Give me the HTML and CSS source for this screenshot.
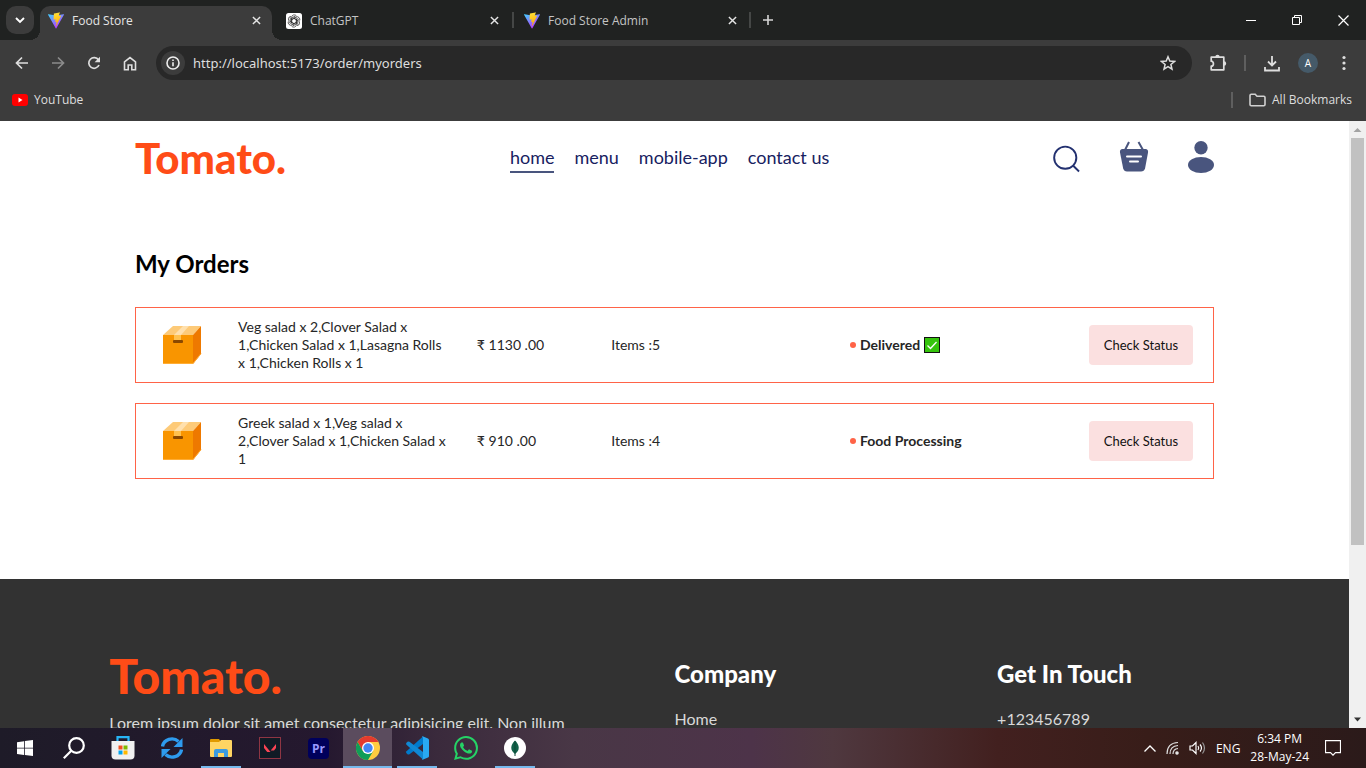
FILE: index.html
```
<!DOCTYPE html>
<html lang="en">
<head>
<meta charset="utf-8">
<title>Food Store</title>
<link rel="stylesheet" href="styles.css">
</head>
<body>
<svg class="defs" width="0" height="0" aria-hidden="true">
  <defs>
    <linearGradient id="vite-a" x1="0" y1="0" x2="0.6" y2="1"><stop offset="0" stop-color="#41d1ff"/><stop offset="1" stop-color="#bd34fe"/></linearGradient>
    <linearGradient id="vite-b" x1="0.4" y1="0" x2="0.6" y2="1"><stop offset="0" stop-color="#ffea83"/><stop offset="0.1" stop-color="#ffdd35"/><stop offset="1" stop-color="#ffa800"/></linearGradient>
    <symbol id="vite" viewBox="0 0 256 257"><path fill="url(#vite-a)" d="M255 38 134 254c-2 4-9 4-11 0L1 38c-3-5 1-11 7-10l120 21L247 28c7-1 11 5 8 10z"/><path fill="url(#vite-b)" d="M185 0 97 17c-2 0-3 2-3 3l-5 92c0 2 2 4 4 4l25-6c2-1 4 1 4 4l-7 35c-1 3 1 5 4 4l15-4c3-1 5 1 4 4l-12 56c-1 4 4 5 6 3l77-157c1-3-1-5-4-5l-27 6c-3 0-5-2-4-5l17-61c1-3-1-5-6-5z"/></symbol>
    <symbol id="close" viewBox="0 0 10 10"><path d="M1 1l8 8M9 1L1 9" fill="none" stroke="currentColor" stroke-width="1.6"/></symbol>
    <symbol id="box" viewBox="0 0 40 40"><path fill="#fdca78" d="M1 10 11 1h28l-8 9z"/><path fill="#f99500" d="M1 10h30v29H1z"/><path fill="#ee7900" d="M31 10l8-9v28l-8 10z"/><path fill="#ffe0ad" d="M12 10l9-9h6l-8 9z"/><path fill="#ffc14f" d="M12 10h7v5h-7z"/><rect x="11" y="15" width="10" height="3" rx="1" fill="#8a4800"/><path d="M1 38.500h30l8-10" fill="none" stroke="#ffad35"/></symbol>
  </defs>
</svg>

<header class="chrome">
  <div class="tabstrip">
    <button class="tab-search" aria-label="Search tabs"><svg width="10" height="7" viewBox="0 0 10 7"><path d="M1 1l4 4 4-4" fill="none" stroke="#fff" stroke-width="1.900"/></svg></button>
    <div class="tab tab-active"><svg width="16" height="17"><use href="#vite"/></svg><span class="tab-title">Food Store</span><button class="tab-close" aria-label="Close tab"><svg width="9" height="9"><use href="#close"/></svg></button></div>
    <div class="tab"><svg width="16" height="16" viewBox="0 0 32 32"><rect width="32" height="32" rx="5" fill="#fff"/><g fill="none" stroke="#222" stroke-width="1.300"><g id="arm"><path d="M11 19.500V9a5.500 5.500 0 0 1 10-3M11.500 13.500l7.500-4.300 7 4"/></g><use href="#arm" transform="rotate(60 16 16)"/><use href="#arm" transform="rotate(120 16 16)"/><use href="#arm" transform="rotate(180 16 16)"/><use href="#arm" transform="rotate(240 16 16)"/><use href="#arm" transform="rotate(300 16 16)"/></g></svg><span class="tab-title">ChatGPT</span><button class="tab-close" aria-label="Close tab"><svg width="9" height="9"><use href="#close"/></svg></button></div>
    <div class="tab tab-ruled"><svg width="16" height="17"><use href="#vite"/></svg><span class="tab-title">Food Store Admin</span><button class="tab-close" aria-label="Close tab"><svg width="9" height="9"><use href="#close"/></svg></button></div>
    <button class="new-tab" aria-label="New tab"><svg width="12" height="12" viewBox="0 0 12 12"><path d="M6 1v10M1 6h10" stroke="#d5d5d5" stroke-width="1.600"/></svg></button>
    <div class="window-controls">
      <button aria-label="Minimize"><svg width="11" height="11" viewBox="0 0 11 11"><path d="M0 5.500h10" stroke="#fff"/></svg></button>
      <button aria-label="Restore"><svg width="11" height="11" viewBox="0 0 11 11" fill="none" stroke="#fff"><path d="M.5 2.500h7v7h-7zM2.500 2.500v-2h7v7h-2"/></svg></button>
      <button aria-label="Close"><svg width="11" height="11" viewBox="0 0 11 11"><path d="M.5.5l10 10M10.500.5l-10 10" stroke="#fff" stroke-width="1.200"/></svg></button>
    </div>
  </div>
  <div class="toolbar">
    <button aria-label="Back"><svg width="14" height="14" viewBox="0 0 14 14"><path d="M13 7H2M7 1.500L1.500 7 7 12.500" fill="none" stroke="#dedede" stroke-width="1.700"/></svg></button>
    <button aria-label="Forward"><svg width="14" height="14" viewBox="0 0 14 14"><path d="M1 7h11M7 1.500L12.500 7 7 12.500" fill="none" stroke="#8b8b8b" stroke-width="1.700"/></svg></button>
    <button aria-label="Reload"><svg width="14" height="14" viewBox="0 0 14 14"><path d="M12 9A5.300 5.300 0 1 1 11.500 4" fill="none" stroke="#dedede" stroke-width="1.700"/><path d="M13 .8v5.400H7.600z" fill="#dedede"/></svg></button>
    <button aria-label="Home"><svg width="14" height="15" viewBox="0 0 14 15"><path d="M1.500 5.800L7 1.500l5.500 4.300v7.900H8.800V9H5.200v4.700H1.500z" fill="none" stroke="#dedede" stroke-width="1.600"/></svg></button>
    <div class="omnibox">
      <button class="site-info" aria-label="Site information"><svg width="14" height="14" viewBox="0 0 14 14"><circle cx="7" cy="7" r="6" fill="none" stroke="#eee" stroke-width="1.600"/><path d="M7 6.200v4M7 3.600v1.500" stroke="#eee" stroke-width="1.600"/></svg></button>
      <input type="text" aria-label="Address" value="http://localhost:5173/order/myorders">
      <button class="star" aria-label="Bookmark this tab"><svg width="16" height="16" viewBox="0 0 16 16"><path d="M8 1.800l1.800 4.300 4.700.4-3.600 3 1.100 4.600L8 11.700l-4 2.400 1.100-4.600-3.600-3 4.700-.4z" fill="none" stroke="#dedede" stroke-width="1.500"/></svg></button>
    </div>
    <button class="ext" aria-label="Extensions"><svg width="18" height="18" viewBox="0 0 18 18"><path d="M2.200 3.200h12.600v12.600H2.200v-3.600c3 0 3-5 0-5z" fill="none" stroke="#dedede" stroke-width="1.700" stroke-linejoin="round"/><path d="M6.300 3a2.200 2.200 0 0 1 4.400 0zM15 7.300a2.200 2.200 0 0 1 0 4.400z" fill="#dedede"/></svg></button>
    <span class="rule"></span>
    <button class="dl" aria-label="Downloads"><svg width="16" height="17" viewBox="0 0 16 17"><path d="M8 1v9M4 6.500l4 4 4-4M1 12v3.500h14V12" fill="none" stroke="#dedede" stroke-width="1.800"/></svg></button>
    <button class="avatar" aria-label="Profile">A</button>
    <button class="more" aria-label="Menu"><svg width="4" height="16" viewBox="0 0 4 16" fill="#dedede"><circle cx="2" cy="2.500" r="1.600"/><circle cx="2" cy="8" r="1.600"/><circle cx="2" cy="13.500" r="1.600"/></svg></button>
  </div>
  <nav class="bookmarks" aria-label="Bookmarks">
    <a href="#"><svg width="16" height="12" viewBox="0 0 16 12"><rect width="16" height="12" rx="3" fill="#f00"/><path d="M6.500 3.500v5l4-2.500z" fill="#fff"/></svg>YouTube</a>
    <span class="rule rule-end"></span>
    <a href="#"><svg width="17" height="14" viewBox="0 0 17 14"><path d="M1 2.500q0-1.200 1.200-1.200h4l1.800 2h6.800q1.200 0 1.200 1.200v7q0 1.200-1.200 1.200H2.200Q1 12.700 1 11.500z" fill="none" stroke="#d0d0d0" stroke-width="1.600"/></svg>All Bookmarks</a>
  </nav>
</header>

<div class="viewport">
  <div class="page">
    <div class="app">
      <header class="navbar">
        <a class="logo" href="#">Tomato.</a>
        <nav class="menu">
          <a class="active" href="#">home</a><a href="#">menu</a><a href="#">mobile-app</a><a href="#">contact us</a>
        </nav>
        <div class="nav-right">
          <button class="search" aria-label="Search"><svg width="27" height="28" viewBox="0 0 28 28" fill="none" stroke="#233170" stroke-width="2"><circle cx="12.700" cy="12.700" r="11.500"/><path d="M20.500 20.500l6.500 6.500"/></svg></button>
          <button aria-label="Basket"><svg width="30" height="31" viewBox="0 0 30 31"><path d="M10 1L6 9M19.500 1l4.500 8" stroke="#49557e" stroke-width="2"/><path d="M3 8h24q2.500.5 2 3.500l-3 16q-.8 3-4 3H8q-3 0-3.800-3L1 11.500Q.5 8.500 3 8z" fill="#49557e"/><path d="M8 15.500h14M11 20.500h8" stroke="#fff" stroke-width="2" stroke-linecap="round"/></svg></button>
          <button aria-label="Profile"><svg width="26" height="32" viewBox="0 0 26 32" fill="#49557e"><circle cx="13" cy="6.700" r="6.700"/><ellipse cx="13" cy="24" rx="13" ry="8"/></svg></button>
        </div>
      </header>
      <main class="my-orders">
        <h2>My Orders</h2>
        <div class="orders">
          <article class="order">
            <svg class="parcel" width="40" height="40"><use href="#box"/></svg>
            <p class="dishes">Veg salad x 2,Clover Salad x<br>1,Chicken Salad x 1,Lasagna Rolls<br>x 1,Chicken Rolls x 1</p>
            <p>₹ 1130 .00</p>
            <p>Items :5</p>
            <p class="state"><span class="dot"></span><b>Delivered</b><svg width="16" height="16" viewBox="0 0 16 16" role="img" aria-label="Done"><rect x=".5" y=".5" width="15" height="15" fill="#35c40c" stroke="#111"/><path d="M3.500 8.500l3 3L12.500 5" fill="none" stroke="#fff" stroke-width="1.300"/></svg></p>
            <button>Check Status</button>
          </article>
          <article class="order">
            <svg class="parcel" width="40" height="40"><use href="#box"/></svg>
            <p class="dishes">Greek salad x 1,Veg salad x<br>2,Clover Salad x 1,Chicken Salad x<br>1</p>
            <p>₹ 910 .00</p>
            <p>Items :4</p>
            <p class="state"><span class="dot"></span><b>Food Processing</b></p>
            <button>Check Status</button>
          </article>
        </div>
      </main>
    </div>
    <footer class="footer">
      <section><div class="logo logo-footer">Tomato.</div><p>Lorem ipsum dolor sit amet consectetur adipisicing elit. Non illum</p></section>
      <section><h2>Company</h2><ul><li>Home</li></ul></section>
      <section><h2>Get In Touch</h2><ul><li>+123456789</li></ul></section>
    </footer>
  </div>
  <div class="scrollbar" aria-hidden="true">
    <svg width="17" height="17" viewBox="0 0 17 17"><path d="M4.500 11L8.500 7l4 4z" fill="#a3a3a3"/></svg>
    <div class="track"><div class="thumb"></div></div>
    <svg width="17" height="17" viewBox="0 0 17 17"><path d="M5 6.500h7l-3.500 4z" fill="#333"/></svg>
  </div>
</div>

<footer class="taskbar">
  <button aria-label="Start"><svg width="16" height="16" viewBox="0 0 16 16" fill="#fff"><path d="M0 2.200l7-1v6.500H0zM7.800 1.100L16 0v7.700H7.800zM0 8.400h7v6.500l-7-1zM7.800 8.400H16V16l-8.200-1.100z"/></svg></button>
  <button aria-label="Search"><svg width="22" height="22" viewBox="0 0 22 22" fill="none" stroke="#fff" stroke-width="2.200"><circle cx="13.500" cy="8.500" r="7.300"/><path d="M8.300 13.700L.8 21.200"/></svg></button>
  <button aria-label="Store"><svg width="24" height="24" viewBox="0 0 24 24"><path d="M6.500 6V1.200h11V6" fill="none" stroke="#27b5f5" stroke-width="2.200"/><path d="M.5 5h23v14.500q0 4-4 4h-15q-4 0-4-4z" fill="#f1f1f1"/><path fill="#f25022" d="M7.500 9.500h4v4h-4z"/><path fill="#7fba00" d="M12.500 9.500h4v4h-4z"/><path fill="#00a4ef" d="M7.500 14.500h4v4h-4z"/><path fill="#ffb900" d="M12.500 14.500h4v4h-4z"/></svg></button>
  <button aria-label="Sync"><svg width="22" height="22" viewBox="0 0 22 22"><g id="sync"><path d="M1.500 9.500A9.500 9 0 0 1 17.500 4.500" fill="none" stroke="#2e9bee" stroke-width="3.400"/><path d="M21.500 1v9h-9z" fill="#2e9bee"/></g><use href="#sync" transform="rotate(180 11 11)"/></svg></button>
  <button class="open" aria-label="Explorer"><svg width="22" height="20" viewBox="0 0 22 20"><path fill="#e09a00" d="M0 2q0-1 1-1h8l2 3v4H0z"/><path fill="#ffd563" d="M0 4h9l2-2h10q1 0 1 1v15q0 1-1 1H1q-1 0-1-1z"/><path fill="#3c9be0" d="M4 19v-6q0-2 2-2h10q2 0 2 2v6h-4v-4H8v4z"/></svg></button>
  <button aria-label="Valorant"><svg width="22" height="22" viewBox="0 0 22 22"><rect x=".5" y=".5" width="21" height="21" fill="#101b25" stroke="#8e3543"/><path fill="#fa4454" d="M5 7l6.500 8H8.200L5 11zM17 7v4l-2 2.500h-3.300z"/></svg></button>
  <button aria-label="Premiere Pro"><span class="premiere">Pr</span></button>
  <button class="open current" aria-label="Chrome"><svg width="24" height="24" viewBox="0 0 24 24"><circle cx="12" cy="12" r="12" fill="#ffcd40"/><path fill="#e33b2e" d="M1.600 6A12 12 0 0 1 22.400 6H12l-5.200 9z"/><path fill="#109d58" d="M1.600 6l5.200 9L12 18l5.200-3L12 24A12 12 0 0 1 1.600 6z"/><circle cx="12" cy="12" r="6" fill="#fff"/><circle cx="12" cy="12" r="4.700" fill="#4286f5"/></svg></button>
  <button class="open" aria-label="Visual Studio Code"><svg width="24" height="24" viewBox="0 0 24 24"><path d="M18 .5L1.500 15.300q-1 1 0 2l1 .9q1 .7 2 0L18 8z" fill="#007acc"/><path d="M18 23.500L1.500 8.700q-1-1 0-2l1-.9q1-.7 2 0L18 16z" fill="#1088d4"/><path d="M17 0l6 2.500q1 .5 1 1.500v16q0 1-1 1.500L17 24l1-2V2z" fill="#29a9f2"/></svg></button>
  <button aria-label="WhatsApp"><svg width="24" height="24" viewBox="0 0 24 24" fill="#25d366"><path d="M17.472 14.382c-.297-.149-1.758-.867-2.030-.967-.273-.099-.471-.148-.670.150-.197.297-.767.966-.940 1.164-.173.199-.347.223-.644.075-.297-.150-1.255-.463-2.390-1.475-.883-.788-1.480-1.761-1.653-2.059-.173-.297-.018-.458.130-.606.134-.133.298-.347.446-.520.149-.174.198-.298.298-.497.099-.198.050-.371-.025-.520-.075-.149-.669-1.612-.916-2.207-.242-.579-.487-.5-.669-.510-.173-.008-.371-.010-.570-.010-.198 0-.520.074-.792.372-.272.297-1.040 1.016-1.040 2.479 0 1.462 1.065 2.875 1.213 3.074.149.198 2.096 3.200 5.077 4.487.709.306 1.262.489 1.694.625.712.227 1.360.195 1.871.118.571-.085 1.758-.719 2.006-1.413.248-.694.248-1.289.173-1.413-.074-.124-.272-.198-.570-.347m-5.421 7.403h-.004a9.870 9.870 0 0 1-5.031-1.378l-.361-.214-3.741.982.998-3.648-.235-.374a9.860 9.860 0 0 1-1.510-5.260c.001-5.450 4.436-9.884 9.888-9.884a9.880 9.880 0 0 1 9.885 9.892c-.003 5.450-4.437 9.884-9.885 9.884m8.413-18.297A11.815 11.815 0 0 0 12.050 0C5.495 0 .160 5.335.157 11.892c0 2.096.547 4.142 1.588 5.945L.057 24l6.305-1.654a11.882 11.882 0 0 0 5.683 1.448h.005c6.554 0 11.890-5.335 11.893-11.893a11.821 11.821 0 0 0-3.480-8.413z"/></svg></button>
  <button class="open" aria-label="MongoDB Compass"><svg width="22" height="22" viewBox="0 0 22 22"><circle cx="11" cy="11" r="11" fill="#fff"/><path d="M11 3.500c5 5 5 10 0 13.500-5-3.500-5-8.500 0-13.500z" fill="#116149"/><path d="M11 4v15" stroke="#0a4936"/></svg></button>
  <div class="tray">
    <svg width="12" height="7" viewBox="0 0 12 7"><path d="M.5 6.500L6 1l5.500 5.500" fill="none" stroke="#fff" stroke-width="1.300"/></svg>
    <svg width="13" height="14" viewBox="0 0 13 14" fill="none" stroke="#ddd" stroke-width="1.200"><path d="M1 13Q1 2 12 1.500M4 13Q4 5 12 4.500M7 13Q7 8 12 7.500"/><circle cx="11" cy="12" r="1.200" fill="#fff"/></svg>
    <svg width="17" height="14" viewBox="0 0 17 14" fill="none" stroke="#fff" stroke-width="1.200"><path d="M1 5h2.500L7 1.500v11L3.500 9H1zM9 5q1.500 2 0 4M11 3.500q3 3.500 0 7"/><path d="M13.500 1.500q4 5.500 0 11" stroke="#999"/></svg>
    <span class="lang">ENG</span>
    <span class="clock"><span>6:34 PM</span><span>28-May-24</span></span>
    <svg class="notify" width="16" height="16" viewBox="0 0 16 16"><path d="M.5.700h15v12h-5L8 15.200l-2.500-2.500h-5z" fill="none" stroke="#fff" stroke-width="1.200"/></svg>
  </div>
</footer>
</body>
</html>
```
FILE: styles.css
```
* { box-sizing: border-box; margin: 0; padding: 0; }

body {
  display: flex;
  flex-direction: column;
  height: 100vh;
  overflow: hidden;
  background: #fff;
  font-family: "Lato", "Noto Sans", sans-serif;
}

.defs { position: absolute; }
svg { display: block; flex: none; }
button { border: 0; background: none; color: inherit; font: inherit; display: grid; place-items: center; flex: none; }
a { color: inherit; text-decoration: none; }
ul { list-style: none; }

/* Browser window */
.chrome { flex: none; background: #3c3c3c; color: #dedede; font-family: "Open Sans", "Noto Sans", sans-serif; font-size: 12px; }
.tabstrip { display: flex; align-items: center; height: 40px; padding-left: 6px; background: #202221; }
.tab-search { width: 28px; height: 28px; border-radius: 10px; background: #3c3c3c; margin-right: 6px; }
.tab { display: flex; align-items: center; gap: 8px; width: 238px; height: 34px; padding: 0 10px 5px 14px; align-self: flex-end; position: relative; color: #c4c4c4; }
.tab-active { width: 232px; padding-left: 8px; background: #3c3c3c; border-radius: 10px 10px 0 0; color: #e5e5e5; }
.tab-active::before, .tab-active::after { content: ""; position: absolute; bottom: 0; width: 10px; height: 10px; }
.tab-active::before { left: -10px; background: radial-gradient(circle at 0 0, transparent 10px, #3c3c3c 10px); }
.tab-active::after { right: -10px; background: radial-gradient(circle at 100% 0, transparent 10px, #3c3c3c 10px); }
.tab-title { flex: 1; white-space: nowrap; overflow: hidden; }
.tab-close { width: 12px; height: 16px; color: #e5e5e5; }
.tab-ruled::before, .tab-ruled::after { content: ""; position: absolute; top: 6px; width: 2px; height: 16px; background: #454746; }
.tab-ruled::before { left: 2px; }
.tab-ruled::after { right: -3px; }
.new-tab { width: 40px; height: 28px; }
.window-controls { display: flex; margin-left: auto; }
.window-controls button { width: 46px; height: 40px; }

.toolbar { display: flex; align-items: center; height: 46px; padding: 0 4px; border-radius: 8px 8px 0 0; }
.toolbar > button { width: 36px; height: 36px; }
.omnibox { display: flex; align-items: center; flex: 1; height: 34px; margin: 0 8px; padding: 0 12px 0 5px; border-radius: 17px; background: #282828; }
.site-info { width: 24px; height: 24px; border-radius: 12px; background: #3c3c3c; }
.omnibox input { flex: 1; min-width: 0; padding: 0 8px; border: 0; outline: 0; background: none; color: #dedede; font-family: "Noto Sans", sans-serif; font-size: 13px; }
.star { width: 24px; height: 24px; }
.rule { width: 2px; height: 16px; background: #5f5f5f; margin: 0 8px; }
.toolbar .avatar { width: 20px; height: 20px; margin: 0 8px; border-radius: 10px; background: #455a69; color: #fff; font-size: 10px; }
.bookmarks { display: flex; align-items: center; height: 35px; padding: 0 14px 8px 12px; }
.bookmarks a { display: flex; align-items: center; gap: 6px; }
.rule-end { margin: 0 16px 0 auto; }

/* Page area and its scroll bar */
.viewport { display: flex; flex: 1; min-height: 0; }
.page { flex: 1; min-width: 0; overflow: hidden; }
.scrollbar { display: flex; flex-direction: column; width: 17px; background: #f0f0f0; }
.track { flex: 1; padding: 0 2px; }
.thumb { height: 71%; background: #c1c1c1; }

.app { width: 80%; margin: 0 auto; }
.navbar { display: flex; align-items: flex-start; justify-content: space-between; padding: 20px 0 12px; }
.logo { color: #ff4c17; font-size: 42px; line-height: 34px; font-weight: 900; }
.menu { display: flex; gap: 20px; margin-top: 5px; color: #17215f; font-size: 18px; line-height: 23px; }
.menu a { padding-bottom: 2px; border-bottom: 2px solid transparent; }
.menu .active { border-color: #49557e; }
.nav-right { display: flex; align-items: flex-start; gap: 39px; }
.nav-right .search { padding-top: 4px; }

.my-orders { margin: 62px 0 100px; }
.my-orders h2 { color: #000; font-size: 24px; line-height: 30px; }
.orders { display: flex; flex-direction: column; gap: 20px; margin-top: 28px; }
.order { display: grid; grid-template-columns: 1fr 4fr 2fr 4fr 4fr 2fr; gap: 30px; align-items: center; padding: 10px 20px; border: 1px solid tomato; color: #262626; font-size: 14px; line-height: 18px; }
.order p { white-space: nowrap; }
.parcel { justify-self: center; }
.state { display: flex; align-items: center; gap: 4px; }
.dot { width: 6px; height: 6px; border-radius: 3px; background: tomato; }
.order button { height: 40px; border-radius: 4px; background: #fbe0e0; color: #111; font-size: 13px; }

.footer { display: grid; grid-template-columns: 2fr 1fr 1fr; gap: 80px; padding: 80px 8vw; background: #323232; color: #d9d9d9; font-size: 16px; line-height: 20px; }
.footer section { display: flex; flex-direction: column; gap: 20px; }
.footer p { white-space: nowrap; }
.footer h2 { color: #fff; font-size: 24px; line-height: 30px; font-weight: 900; }
.footer .logo-footer { font-size: 48px; }

/* Desktop task bar */
.taskbar { display: flex; align-items: stretch; flex: none; height: 40px; background: linear-gradient(90deg, #1e1b28 0, #25182f 24%, #3a2a3c 32%, #493746 42%, #4d3349 55%, #4f383f 61%, #42201f 73%, #381d19 84%, #2b1a1a 100%); color: #fff; font-family: "Open Sans", "Noto Sans", sans-serif; font-size: 12px; }
.taskbar button { width: 49px; }
.taskbar .open { background: linear-gradient(#76b9ed, #76b9ed) center bottom / 40px 2px no-repeat; }
.taskbar .current { background: linear-gradient(#76b9ed, #76b9ed) center bottom / 100% 2px no-repeat #5b4c5e; }
.premiere { display: grid; place-items: center; width: 21px; height: 21px; border-radius: 4px; background: #00005b; color: #9999ff; font-size: 12px; font-weight: 700; }
.tray { display: flex; align-items: center; gap: 10px; margin-left: auto; padding-right: 25px; }
.clock { display: flex; flex-direction: column; align-items: center; line-height: 18px; }
.notify { margin-left: 6px; }
```
